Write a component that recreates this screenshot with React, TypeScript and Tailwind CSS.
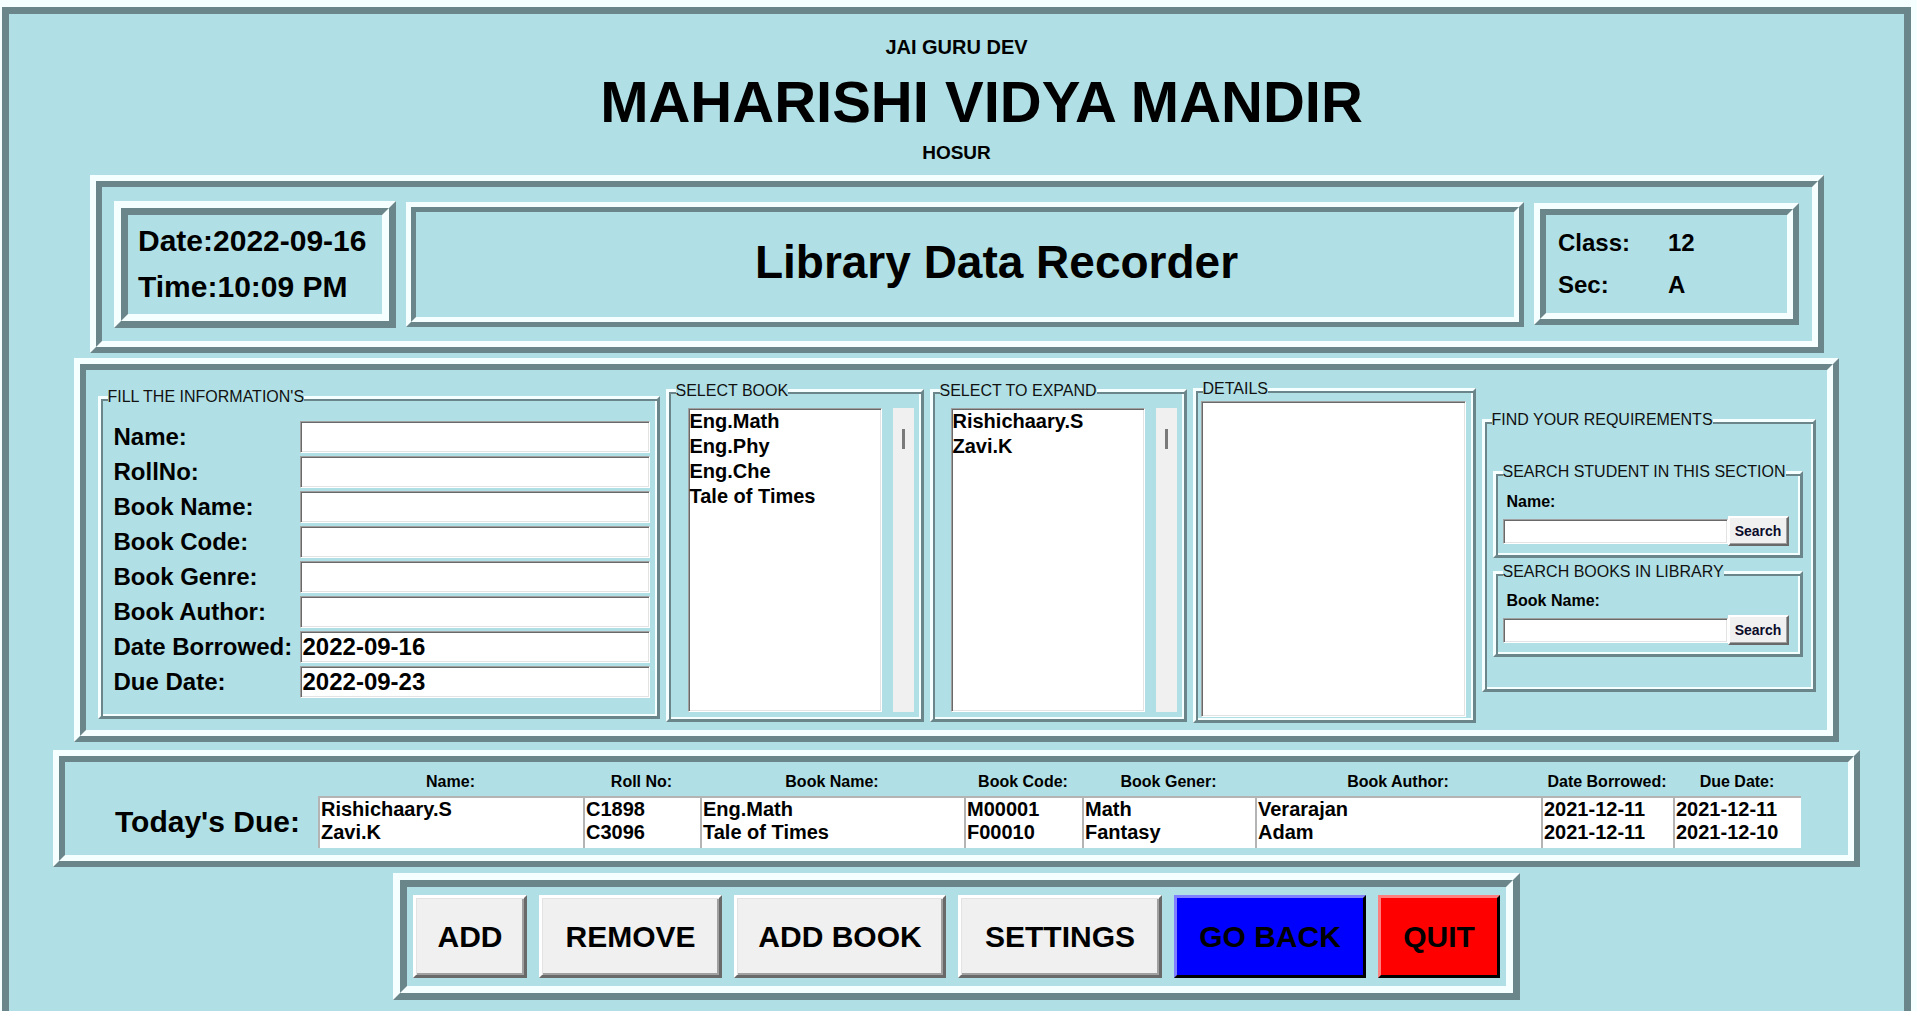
import React from 'react';

const LT = 'border-t-[#f6ffff] border-l-[#f6ffff] border-b-[#6a868a] border-r-[#6a868a]';
const DK = 'border-t-[#6a868a] border-l-[#6a868a] border-b-[#f6ffff] border-r-[#f6ffff]';
const SUNK =
  'bg-white border border-t-[#a0a0a0] border-l-[#a0a0a0] border-b-white border-r-white shadow-[inset_1px_1px_0_#696969,inset_-1px_-1px_0_#e3e3e3]';

interface RidgeProps {
  bw: string;
  className?: string;
  innerClass?: string;
  children?: React.ReactNode;
}

// tk style ridge: light outside / dark inside on top-left, reversed on bottom-right
const Ridge: React.FC<RidgeProps> = ({ bw, className = '', innerClass = '', children }) => (
  <div className={`${bw} ${LT} ${className}`}>
    <div className={`${bw} ${DK} w-full h-full ${innerClass}`}>{children}</div>
  </div>
);

interface GroupProps {
  title: string;
  className?: string;
  children?: React.ReactNode;
}

const Group: React.FC<GroupProps> = ({ title, className = '', children }) => (
  <fieldset
    className={`border-[3px] ${LT} shadow-[inset_2px_2px_0_#6a868a,inset_-2px_-2px_0_#f6ffff] ${className}`}
  >
    <legend className="ml-[7px] bg-[#b0e0e6] text-[16px] leading-[16px] text-[#111]">{title}</legend>
    {children}
  </fieldset>
);

const Scroll = () => (
  <div className="w-[21px] h-[304px] bg-[#f0f0f0] pt-[21px]">
    <div className="mx-auto w-[3px] h-[20px] bg-[#7a7a7a]" />
  </div>
);

const SearchButton = () => (
  <button className="w-[61px] h-[30px] bg-[#f0f0f0] border-2 border-t-white border-l-white border-b-[#696969] border-r-[#696969] shadow-[inset_-1px_-1px_0_#a0a0a0] text-[14px] font-bold text-[#0b0b2a]">
    Search
  </button>
);

const fields: [string, string][] = [
  ['Name:', ''],
  ['RollNo:', ''],
  ['Book Name:', ''],
  ['Book Code:', ''],
  ['Book Genre:', ''],
  ['Book Author:', ''],
  ['Date Borrowed:', '2022-09-16'],
  ['Due Date:', '2022-09-23'],
];

const dueCols = [
  { h: 'Name:', w: 'w-[265px]', rows: ['Rishichaary.S', 'Zavi.K'] },
  { h: 'Roll No:', w: 'w-[117px]', rows: ['C1898', 'C3096'] },
  { h: 'Book Name:', w: 'w-[264px]', rows: ['Eng.Math', 'Tale of Times'] },
  { h: 'Book Code:', w: 'w-[118px]', rows: ['M00001', 'F00010'] },
  { h: 'Book Gener:', w: 'w-[173px]', rows: ['Math', 'Fantasy'] },
  { h: 'Book Author:', w: 'w-[286px]', rows: ['Verarajan', 'Adam'] },
  { h: 'Date Borrowed:', w: 'w-[132px]', rows: ['2021-12-11', '2021-12-11'] },
  { h: 'Due Date:', w: 'w-[128px]', rows: ['2021-12-11', '2021-12-10'] },
];

const GREY_BTN =
  'bg-[#f0f0f0] border-[3px] border-t-white border-l-white border-b-[#696969] border-r-[#696969] shadow-[inset_1px_1px_0_#e3e3e3,inset_-2px_-2px_0_#a0a0a0]';

export default function App() {
  return (
    <div className="w-[1917px] h-[1011px] overflow-hidden bg-[#f6ffff] pt-[7px] pl-[2px] font-['Liberation_Sans',Arial,sans-serif] text-black">
      <div className="w-[1909px] h-[1004px] border-[7px] border-b-0 border-[#6a868a] bg-[#b0e0e6] flex flex-col items-center">
        <div className="mt-[21px] text-[20px] leading-[24px] font-bold">JAI GURU DEV</div>
        <div className="mt-[10px] pl-[50px] text-[58px] leading-[66px] font-bold">MAHARISHI VIDYA MANDIR</div>
        <div className="mt-[6px] text-[19px] leading-[24px] font-bold">HOSUR</div>

        {/* header strip */}
        <Ridge
          bw="border-[6px]"
          className="mt-[10px] w-[1734px] h-[178px]"
          innerClass="flex items-center justify-center gap-[10px]"
        >
          <Ridge
            bw="border-[7px]"
            className="w-[282px] h-[127px]"
            innerClass="flex flex-col justify-center pl-[10px] text-[30px] leading-[46px] font-bold"
          >
            <div>Date:2022-09-16</div>
            <div>Time:10:09 PM</div>
          </Ridge>
          <Ridge
            bw="border-[5px]"
            className="w-[1118px] h-[125px]"
            innerClass="flex items-center justify-center pl-[63px] pb-[4px] text-[46px] leading-[46px] font-bold"
          >
            Library Data Recorder
          </Ridge>
          <Ridge
            bw="border-[6px]"
            className="w-[265px] h-[122px]"
            innerClass="flex flex-col justify-center pl-[12px] text-[24px] leading-[42px] font-bold"
          >
            <div className="flex">
              <span className="w-[110px]">Class:</span>
              <span>12</span>
            </div>
            <div className="flex">
              <span className="w-[110px]">Sec:</span>
              <span>A</span>
            </div>
          </Ridge>
        </Ridge>

        {/* main form */}
        <Ridge
          bw="border-[6px]"
          className="mt-[5px] w-[1765px] h-[384px]"
          innerClass="flex items-center justify-center gap-[6px] pt-[4px]"
        >
          <Group title="FILL THE INFORMATION'S" className="w-[562px] h-[330px] mt-[4px]">
            <div className="pt-[16px] pl-[13px] grid grid-cols-[186px_350px] auto-rows-[32px] gap-y-[3px] items-center">
              {fields.map(([label, value]) => (
                <React.Fragment key={label}>
                  <div className="text-[24px] leading-[28px] font-bold">{label}</div>
                  <div className={`h-[32px] ${SUNK} pl-[2px] text-[24px] leading-[29px] font-bold`}>{value}</div>
                </React.Fragment>
              ))}
            </div>
          </Group>

          <Group title="SELECT BOOK" className="w-[258px] h-[339px]">
            <div className="pt-[9px] pl-[19px] flex gap-[11px]">
              <div className={`w-[194px] h-[304px] ${SUNK} pl-[1px] text-[20px] leading-[25px] font-bold`}>
                <div>Eng.Math</div>
                <div>Eng.Phy</div>
                <div>Eng.Che</div>
                <div>Tale of Times</div>
              </div>
              <Scroll />
            </div>
          </Group>

          <Group title="SELECT TO EXPAND" className="w-[257px] h-[339px]">
            <div className="pt-[9px] pl-[18px] flex gap-[11px]">
              <div className={`w-[194px] h-[304px] ${SUNK} pl-[1px] text-[20px] leading-[25px] font-bold`}>
                <div>Rishichaary.S</div>
                <div>Zavi.K</div>
              </div>
              <Scroll />
            </div>
          </Group>

          <Group title="DETAILS" className="w-[283px] h-[342px]">
            <div className="pt-[4px] pl-[5px]">
              <div className={`w-[265px] h-[316px] ${SUNK}`} />
            </div>
          </Group>

          <Group title="FIND YOUR REQUIREMENTS" className="w-[334px] h-[280px]">
            <div className="pt-[36px] pl-[8px] flex flex-col gap-[6px]">
              <Group title="SEARCH STUDENT IN THIS SECTION" className="w-[310px] h-[94px]">
                <div className="pl-[7px]">
                  <div className="mt-[12px] ml-[4px] text-[16px] leading-[20px] font-bold">Name:</div>
                  <div className="mt-[4px] flex items-center">
                    <div className={`w-[225px] h-[25px] ${SUNK}`} />
                    <SearchButton />
                  </div>
                </div>
              </Group>
              <Group title="SEARCH BOOKS IN LIBRARY" className="w-[310px] h-[93px]">
                <div className="pl-[7px]">
                  <div className="mt-[11px] ml-[4px] text-[16px] leading-[20px] font-bold">Book Name:</div>
                  <div className="mt-[4px] flex items-center">
                    <div className={`w-[225px] h-[25px] ${SUNK}`} />
                    <SearchButton />
                  </div>
                </div>
              </Group>
            </div>
          </Group>
        </Ridge>

        {/* today's due */}
        <Ridge bw="border-[6px]" className="mt-[8px] w-[1807px] h-[117px]" innerClass="flex items-end pb-[7px]">
          <div className="w-[253px] h-[52px] pl-[50px] flex items-center text-[30px] leading-[52px] font-bold">
            Today's Due:
          </div>
          <div className="flex">
            {dueCols.map((c) => (
              <div key={c.h} className={`${c.w} flex flex-col`}>
                <div className="text-center text-[16px] leading-[20px] font-bold">{c.h}</div>
                <div className="mt-[4px] h-[52px] bg-white border-t-2 border-l-2 border-[#b4b4b4] pl-[1px] text-[20px] leading-[23px] font-bold whitespace-nowrap overflow-hidden">
                  {c.rows.map((r, i) => (
                    <div key={i}>{r}</div>
                  ))}
                </div>
              </div>
            ))}
          </div>
        </Ridge>

        {/* buttons */}
        <Ridge
          bw="border-[7px]"
          className="mt-[6px] w-[1127px] h-[127px]"
          innerClass="flex items-center justify-center gap-[12px]"
        >
          <button className={`w-[114px] h-[83px] ${GREY_BTN} text-[30px] font-bold`}>ADD</button>
          <button className={`w-[183px] h-[83px] ${GREY_BTN} text-[30px] font-bold`}>REMOVE</button>
          <button className={`w-[212px] h-[83px] ${GREY_BTN} text-[30px] font-bold`}>ADD BOOK</button>
          <button className={`w-[204px] h-[83px] ${GREY_BTN} text-[30px] font-bold`}>SETTINGS</button>
          <button className="w-[192px] h-[83px] bg-[#0000ff] border-[3px] border-t-[#7f7fff] border-l-[#7f7fff] border-b-black border-r-black text-[30px] font-bold">
            GO BACK
          </button>
          <button className="w-[122px] h-[83px] bg-[#ff0000] border-[3px] border-t-[#ff7f7f] border-l-[#ff7f7f] border-b-black border-r-black text-[30px] font-bold">
            QUIT
          </button>
        </Ridge>
      </div>
    </div>
  );
}
